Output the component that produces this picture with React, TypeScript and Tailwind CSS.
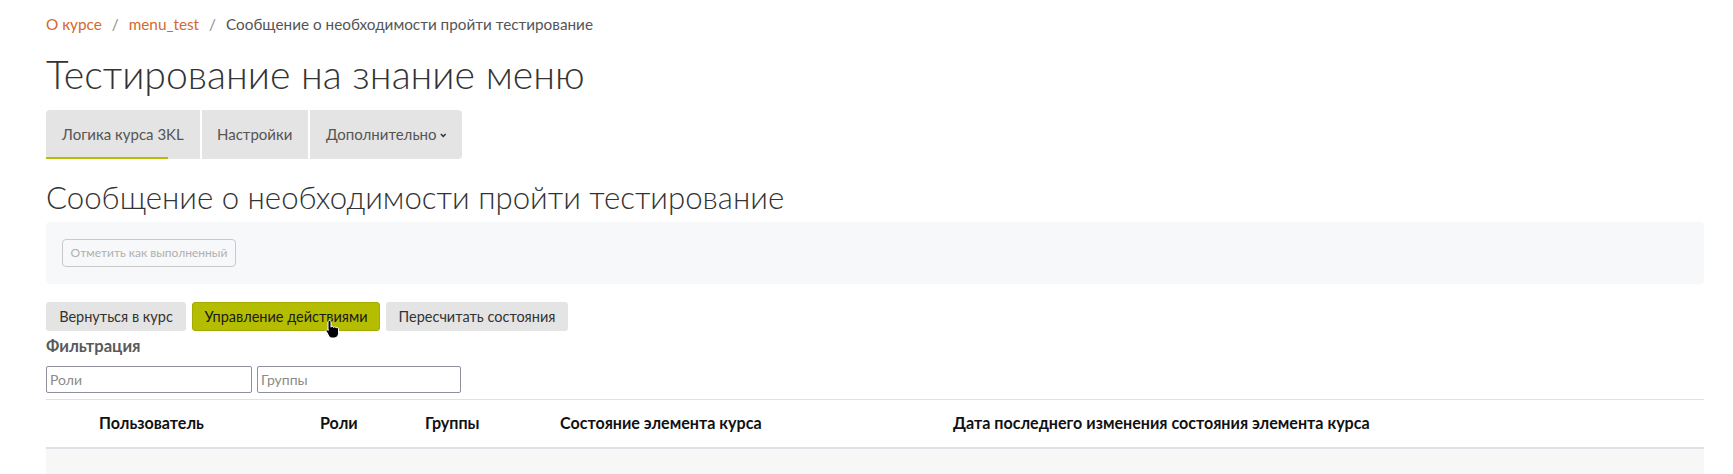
import React from "react";

const font = { fontFamily: "Lato, 'Open Sans', sans-serif" };

function HandCursor() {
  return (
    <svg width="16" height="20" viewBox="0 0 16 20" className="absolute left-[132px] top-[16px]">
      <path
        d="M4.5 1.5c.8 0 1.5.7 1.5 1.5v5.2c.2-.5.7-.8 1.3-.8.7 0 1.2.5 1.3 1.1.2-.4.7-.7 1.2-.7.7 0 1.3.5 1.3 1.2.2-.3.6-.5 1.1-.5.8 0 1.3.6 1.3 1.4v4.4c0 2.6-1.8 4.7-4.4 4.7H7.2c-1.4 0-2.5-.7-3.3-1.8L1.3 12.4c-.4-.6-.2-1.4.4-1.8.6-.4 1.3-.3 1.7.2L3 11.5V3c0-.8.7-1.5 1.5-1.5z"
        fill="#000"
        stroke="#fff"
        strokeWidth="1"
      />
    </svg>
  );
}

export default function App() {
  return (
    <div className="w-[1733px] h-[474px] overflow-hidden bg-white" style={font}>
      <div className="pl-[46px] pr-[29px] pt-[14px] w-full">
        {/* breadcrumb */}
        <div className="flex items-center text-[15.3px] leading-[21px] text-[#555]">
          <span className="text-[#d2692b]">О курсе</span>
          <span className="mx-[10px] text-[#8a8a8a]">/</span>
          <span className="text-[#d2692b]">menu_test</span>
          <span className="mx-[10px] text-[#8a8a8a]">/</span>
          <span>Сообщение о необходимости пройти тестирование</span>
        </div>

        {/* title */}
        <h1 className="mt-[15px] text-[39.2px] leading-[48px] font-light text-[#333]">
          Тестирование на знание меню
        </h1>

        {/* tabs */}
        <div className="mt-[12px] flex h-[49px] text-[15px] text-[#555]">
          <div className="relative flex items-center px-[16px] bg-[#e4e4e4] rounded-tl-[4px] rounded-bl-[4px] w-[154px]">
            Логика курса 3KL
            <div className="absolute left-0 bottom-0 h-[2px] w-[122px] bg-[#b5bd00]" />
          </div>
          <div className="flex items-center px-[15px] bg-[#e4e4e4] ml-[2px] w-[106px]">Настройки</div>
          <div className="flex items-center px-[16px] bg-[#e4e4e4] ml-[2px] w-[152px] rounded-tr-[4px] rounded-br-[4px]">
            Дополнительно
            <svg width="9" height="7" viewBox="0 0 9 7" className="ml-[3px] mt-[2px]">
              <path d="M1.2 1.5l3.3 3.3 3.3-3.3" fill="none" stroke="#333" strokeWidth="2.2" />
            </svg>
          </div>
        </div>

        {/* subheading */}
        <h2 className="mt-[20px] text-[31.2px] leading-[36px] font-light text-[#333]">
          Сообщение о необходимости пройти тестирование
        </h2>

        {/* completion box */}
        <div className="mt-[7px] h-[62px] rounded-[4px] bg-[#f7f8f9] pl-[16px] pt-[17px]">
          <div className="inline-flex h-[28px] w-[174px] items-center justify-center rounded-[4px] border border-[#c9c9c9] text-[12px] text-[#b0b0b0]">
            Отметить как выполненный
          </div>
        </div>

        {/* action buttons */}
        <div className="mt-[18px] flex gap-[6px] text-[14.5px]">
          <div className="flex h-[29px] w-[140px] items-center justify-center rounded-[3px] bg-[#e4e4e4] text-[#333]">
            Вернуться в курс
          </div>
          <div className="relative flex h-[29px] w-[188px] items-center justify-center rounded-[3px] border border-[#a5ab00] bg-[#b5bd00] text-[#1a1a1a]">
            Управление действиями
            <HandCursor />
          </div>
          <div className="flex h-[29px] w-[182px] items-center justify-center rounded-[3px] bg-[#e4e4e4] text-[#333]">
            Пересчитать состояния
          </div>
        </div>

        {/* filter */}
        <div className="mt-[5px] text-[16.6px] leading-[20px] font-bold text-[#5a5a5a]">Фильтрация</div>
        <div className="mt-[10px] flex gap-[5px]">
          <div className="flex h-[27px] w-[206px] items-center border border-[#8f8f9d] rounded-[2px] px-[3px] text-[14px] text-[#8a8a8a]">
            Роли
          </div>
          <div className="flex h-[27px] w-[204px] items-center border border-[#8f8f9d] rounded-[2px] px-[3px] text-[14px] text-[#8a8a8a]">
            Группы
          </div>
        </div>

        {/* table */}
        <table className="mt-[6px] w-full border-collapse text-[16.1px]">
          <thead>
            <tr className="h-[48px] border-t border-[#dee2e6] border-b-2 border-b-[#dee2e6] font-bold text-[#111]">
              <th className="w-[41px]" />
              <th className="w-[221px] px-[12px] text-left">Пользователь</th>
              <th className="w-[105px] px-[12px] text-left">Роли</th>
              <th className="w-[135px] px-[12px] text-left">Группы</th>
              <th className="w-[393px] px-[12px] text-left">Состояние элемента курса</th>
              <th className="px-[12px] text-left">Дата последнего изменения состояния элемента курса</th>
            </tr>
          </thead>
          <tbody>
            <tr className="h-[48px] bg-[#f7f7f7]">
              <td colSpan={6} />
            </tr>
          </tbody>
        </table>
      </div>
    </div>
  );
}
